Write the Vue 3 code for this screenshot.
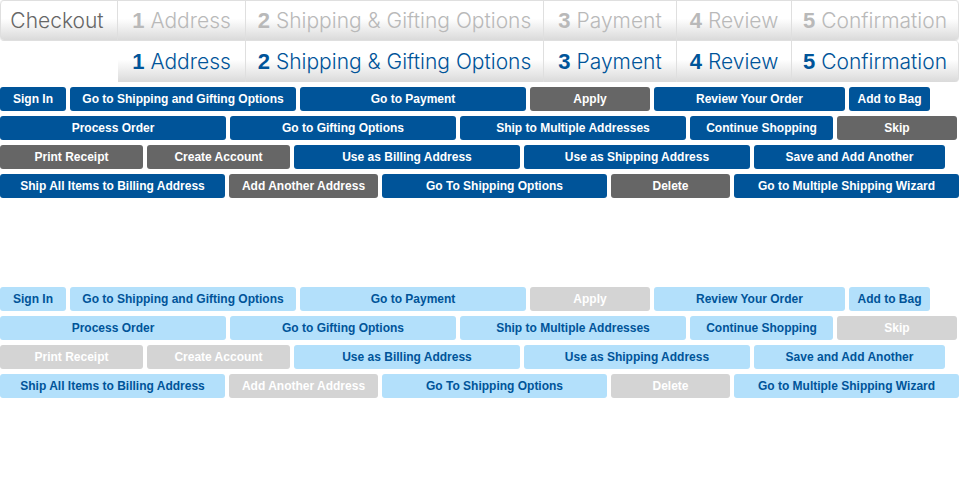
<script setup>
const steps = [
  { n: 1, label: 'Address' },
  { n: 2, label: 'Shipping & Gifting Options' },
  { n: 3, label: 'Payment' },
  { n: 4, label: 'Review' },
  { n: 5, label: 'Confirmation' },
]

const rows = [
  {
    rest: 29,
    items: [
      { label: 'Sign In', w: 66 },
      { label: 'Go to Shipping and Gifting Options', w: 226 },
      { label: 'Go to Payment', w: 226 },
      { label: 'Apply', w: 120, minor: true },
      { label: 'Review Your Order', w: 191 },
      { label: 'Add to Bag', w: 81 },
    ],
  },
  {
    rest: 2,
    items: [
      { label: 'Process Order', w: 226 },
      { label: 'Go to Gifting Options', w: 226 },
      { label: 'Ship to Multiple Addresses', w: 226 },
      { label: 'Continue Shopping', w: 143 },
      { label: 'Skip', w: 120, minor: true },
    ],
  },
  {
    rest: 14,
    items: [
      { label: 'Print Receipt', w: 143, minor: true },
      { label: 'Create Account', w: 143, minor: true },
      { label: 'Use as Billing Address', w: 226 },
      { label: 'Use as Shipping Address', w: 226 },
      { label: 'Save and Add Another', w: 191 },
    ],
  },
  {
    rest: 0,
    items: [
      { label: 'Ship All Items to Billing Address', w: 225 },
      { label: 'Add Another Address', w: 149, minor: true },
      { label: 'Go To Shipping Options', w: 225 },
      { label: 'Delete', w: 119, minor: true },
      { label: 'Go to Multiple Shipping Wizard', w: 225 },
    ],
  },
]

const groups = ['solid', 'pale']
</script>

<template>
  <main class="sheet">
    <header class="bar upcoming">
      <h1 class="cell title">Checkout</h1>
      <a v-for="s in steps" :key="s.n" class="cell" href="#"><b>{{ s.n }}</b>{{ s.label }}</a>
    </header>
    <nav class="bar reached">
      <span></span>
      <a v-for="s in steps" :key="s.n" class="cell" href="#"><b>{{ s.n }}</b>{{ s.label }}</a>
    </nav>
    <section v-for="g in groups" :key="g" class="group" :class="g">
      <div v-for="(row, i) in rows" :key="i" class="row" :style="{ paddingRight: row.rest + 'px' }">
        <button
          v-for="b in row.items"
          :key="b.label"
          type="button"
          class="btn"
          :class="{ minor: b.minor }"
          :style="{ flexGrow: b.w }"
        >{{ b.label }}</button>
      </div>
    </section>
  </main>
</template>

<style>
body {
  background: #fff;
}
</style>

<style scoped>
.sheet {
  font-family: "Liberation Sans", Arial, sans-serif;
}
.bar {
  display: grid;
  grid-template-columns: 118fr 128fr 298fr 133fr 115fr 167fr;
  box-sizing: border-box;
  height: 41px;
  font-family: Inter, "Helvetica Neue", sans-serif;
  font-size: 21px;
  font-weight: 300;
}
.cell {
  display: flex;
  align-items: center;
  justify-content: center;
  gap: 6px;
  box-sizing: border-box;
  min-width: 0;
  margin: 0;
  border-right: 1px solid #dfdfdf;
  background: linear-gradient(#fff 45%, #dadada);
  color: inherit;
  font: inherit;
  white-space: nowrap;
  text-decoration: none;
}
.cell:last-child {
  border-radius: 0 4px 4px 0;
}
.cell b {
  font-family: "Liberation Sans", Arial, sans-serif;
  font-size: 22px;
  font-weight: 700;
}
.upcoming {
  border: 1px solid #dfdfdf;
  border-width: 1px 0;
  border-radius: 4px;
  color: #b9b9b9;
}
.title {
  padding-right: 4px;
  color: #666;
  border-left: 1px solid #dfdfdf;
  border-radius: 4px 0 0 4px;
}
.reached {
  color: #005499;
}
.group {
  display: flex;
  flex-direction: column;
  gap: 5px;
  padding-top: 5px;
  padding-bottom: 84px;
}
.row {
  display: flex;
  gap: 4px;
}
.btn {
  flex: 1 1 0;
  min-width: 0;
  height: 24px;
  padding: 0;
  border: 0;
  border-radius: 3px;
  background: #005499;
  color: #fff;
  font: bold 12px/24px "Liberation Sans", Arial, sans-serif;
  white-space: nowrap;
  cursor: pointer;
}
.minor {
  background: #666;
}
.pale .btn {
  background: #b3e0fb;
  color: #005499;
}
.pale .minor {
  background: #d4d4d4;
  color: #fff;
}
</style>
